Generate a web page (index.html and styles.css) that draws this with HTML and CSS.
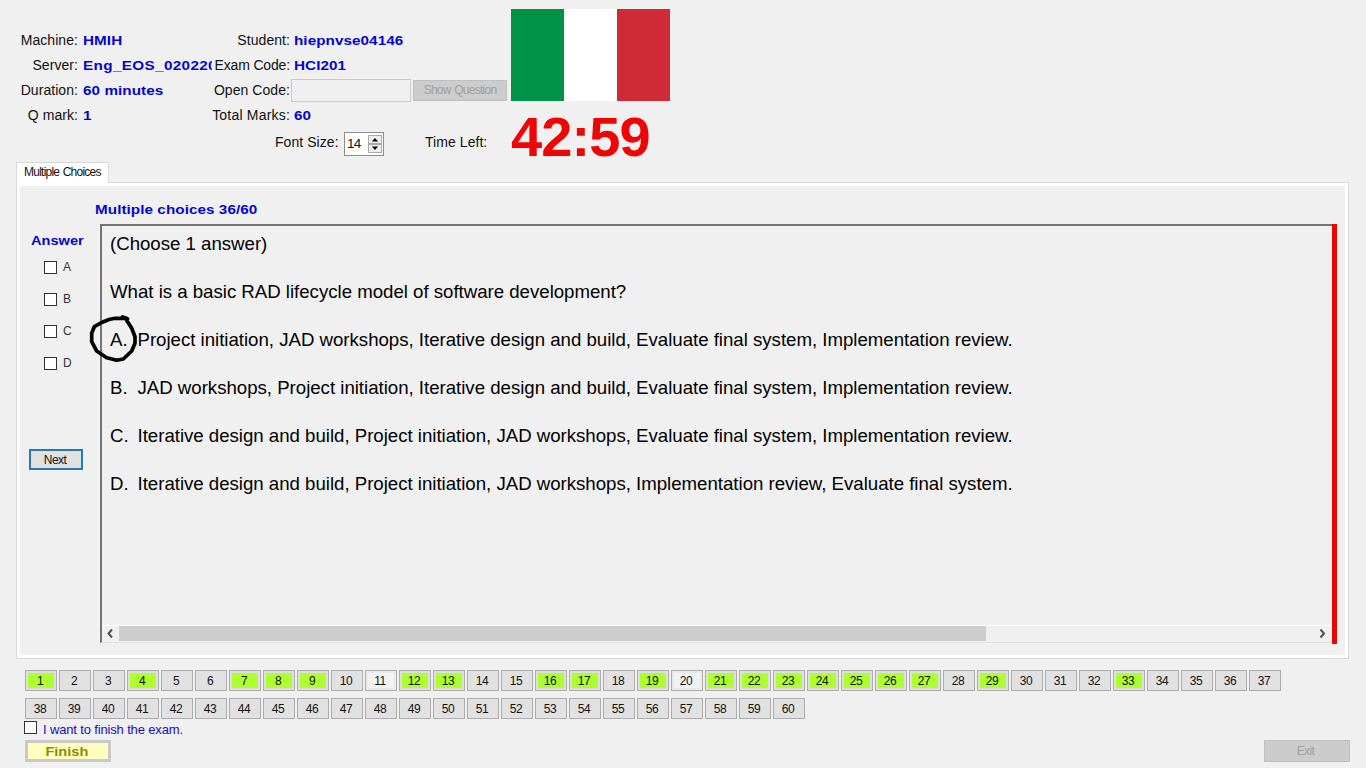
FILE: index.html
```html
<!DOCTYPE html>
<html lang="en">
<head>
<meta charset="utf-8">
<title>Exam</title>
<link rel="stylesheet" href="styles.css">
</head>
<body>
<header class="header">
  <div class="details">
    <div class="info">
      <span class="label">Machine:</span><span class="value">HMIH</span>
      <span class="label">Student:</span><span class="value right">hiepnvse04146</span>
      <span class="label">Server:</span><span class="value server">Eng_EOS_020220</span>
      <span class="label exam">Exam Code:</span><span class="value right">HCI201</span>
      <span class="label">Duration:</span><span class="value">60 minutes</span>
      <span class="label">Open Code:</span><span class="open"><input class="code" disabled><button class="show" disabled>Show Question</button></span>
      <span class="label">Q mark:</span><span class="value">1</span>
      <span class="label total">Total Marks:</span><span class="value right">60</span>
    </div>
    <div class="settings">
      <span class="label size-label">Font Size:</span>
      <div class="spinner"><span class="spin-value">14</span>
        <div class="arrows">
          <svg class="arrow" viewBox="0 0 14 9"><path d="M3 7L7 2.500L11 7Z"/></svg>
          <svg class="arrow" viewBox="0 0 14 9"><path d="M3 2L7 6.500L11 2Z"/></svg>
        </div>
      </div>
      <span class="label">Time Left:</span>
    </div>
  </div>
  <div class="clock">
    <div class="flag"><i class="green"></i><i class="white"></i><i class="red"></i></div>
    <div class="timer">42:59</div>
  </div>
</header>
<div class="tab">Multiple Choices</div>
<main class="panel">
  <h1 class="title">Multiple choices 36/60</h1>
  <div class="work">
    <aside class="side">
      <h2 class="answer">Answer</h2>
      <label class="choice"><i class="box"></i>A</label>
      <label class="choice"><i class="box"></i>B</label>
      <label class="choice"><i class="box"></i>C</label>
      <label class="choice"><i class="box"></i>D</label>
      <button class="next">Next</button>
    </aside>
    <section class="question">
      <div class="text">
        <p class="line">(Choose 1 answer)</p>
        <p class="line">What is a basic RAD lifecycle model of software development?</p>
        <p class="line"><span class="key">A.</span>Project initiation, JAD workshops, Iterative design and build, Evaluate final system, Implementation review.</p>
        <p class="line"><span class="key">B.</span>JAD workshops, Project initiation, Iterative design and build, Evaluate final system, Implementation review.</p>
        <p class="line"><span class="key">C.</span>Iterative design and build, Project initiation, JAD workshops, Evaluate final system, Implementation review.</p>
        <p class="line"><span class="key">D.</span>Iterative design and build, Project initiation, JAD workshops, Implementation review, Evaluate final system.</p>
      </div>
      <div class="scrollbar">
        <svg class="scroll-arrow" viewBox="0 0 17 15"><path d="M10 3.500L6.500 7.500L10 11.500"/></svg>
        <div class="track"><div class="thumb"></div></div>
        <svg class="scroll-arrow" viewBox="0 0 17 15"><path d="M5.500 3.500L9 7.500L5.500 11.500"/></svg>
      </div>
      <svg class="mark" viewBox="0 0 50 50"><path d="M38.500 4L33.500 2L37.500 3.300L26 3.300L20 4.500L12.700 7.500L5.300 11.700L2.700 18.300L2.700 26.700L7.700 36L17.700 42.700L27.700 45.300L34.300 44L42.700 36L46 28.300L46 21.700L42.700 13.300L37.500 5"/></svg>
    </section>
    <div class="redbar"></div>
  </div>
</main>
<nav class="numbers" id="numbers"></nav>
<label class="confirm"><i class="box"></i>I want to finish the exam.</label>
<footer class="footer"><button class="finish"><span class="finish-text">Finish</span></button><button class="exit" disabled>Exit</button></footer>
<script src="app.js"></script>
</body>
</html>
```
FILE: styles.css
```css
* { box-sizing: border-box; }
body { margin: 0; width: 1366px; height: 768px; overflow: hidden; background: #f0f0f0; color: #111; font-family: "Liberation Sans", Arial, sans-serif; font-size: 13.5px; }
button, input { font-family: inherit; margin: 0; padding: 0; border-radius: 0; }
.header { display: flex; height: 162px; }
.details { width: 511px; padding-top: 28px; }
.info { display: grid; grid-template-columns: 78px 134px 78px 221px; grid-auto-rows: 25px; line-height: 25px; }
.label { font-size: 14px; letter-spacing: .06px; white-space: nowrap; justify-self: end; }
.exam { letter-spacing: -.15px; }
.total { letter-spacing: .2px; }
.value { justify-self: start; margin-left: 5px; color: #0505d2; font-weight: bold; letter-spacing: .05px; white-space: nowrap; transform: scaleX(1.13); transform-origin: left; }
.right { margin-left: 4px; }
.server { width: 114px; overflow: hidden; letter-spacing: .32px; }
.open { display: flex; align-items: center; gap: 2px; height: 24px; padding-left: 1px; }
.code { width: 120px; height: 23px; border: 1px solid #c9c9c9; background: #f0f0f0; }
.show { width: 94px; height: 21px; border: 1px solid #bfbfbf; background: #ccc; color: #a0a0a0; font-size: 12px; letter-spacing: -.75px; word-spacing: 1px; }
.settings { display: flex; align-items: center; height: 32px; margin-top: -2px; padding-left: 275px; }
.size-label { width: 63px; }
.spinner { display: flex; justify-content: space-between; width: 40px; height: 24px; margin: 4px 41px 0 6px; padding: 2px 1px 0 2px; border: 1px solid #8c8c8c; background: #fff; }
.spin-value { font-size: 13.5px; line-height: 17px; letter-spacing: -.8px; }
.arrows { display: flex; flex-direction: column; }
.arrow { display: block; width: 14px; height: 9px; border: 1px solid #aaa; background: #eee; }
.clock { width: 159px; padding-top: 9px; }
.flag { display: flex; height: 92px; }
.flag i { flex: 1; }
.green { background: #009246; }
.white { background: #fff; }
.red { background: #ce2b37; }
.timer { color: #f00505; font-size: 56px; line-height: 71px; font-weight: bold; letter-spacing: -.9px; white-space: nowrap; height: 62px; }
.tab { position: relative; z-index: 1; width: 93px; height: 21px; margin: 0 0 -1px 16px; padding-left: 7px; border: 1px solid #d9d9d9; border-bottom: 0; background: #fff; font-size: 12px; line-height: 18px; letter-spacing: -.76px; word-spacing: .8px; white-space: nowrap; }
.panel { width: 1333px; height: 477px; margin-left: 16px; border: 1px solid #dadada; box-shadow: inset 0 0 0 3px #fff; padding-top: 18px; }
.title { width: max-content; height: 23px; margin: 0 0 0 78px; font-size: 13.5px; line-height: 17px; color: #0505d2; letter-spacing: .05px; transform: scaleX(1.13); transform-origin: left; }
.work { display: flex; height: 421px; }
.side { width: 83px; padding-left: 12px; }
.answer { width: max-content; margin: 8px 0 10px 2px; font-size: 13.5px; line-height: 17px; color: #0505d2; transform: scaleX(1.08); transform-origin: left; }
.choice { display: flex; align-items: center; gap: 6px; height: 16px; margin: 0 0 16px 15px; font-size: 12px; line-height: 16px; color: #333; }
.box { width: 13px; height: 13px; border: 1px solid #333; background: #fff; }
.next { display: block; width: 54px; height: 21px; margin-top: 78px; border: 2px solid #2879ad; background: #e1e1e1; box-shadow: inset 0 0 0 1px #cce4f5; font-size: 12px; letter-spacing: -.6px; padding-right: 2px; color: #111; }
.question { position: relative; width: 1232px; height: 419px; border: solid; border-width: 2px 0 1px 2px; border-color: #747474 #fff #e2e2e2 #747474; }
.text { padding: 6px 0 0 8px; height: 399px; }
.line { margin: 0 0 24px; font-size: 18.67px; line-height: 24px; white-space: nowrap; color: #000; letter-spacing: -.02px; }
.key { display: inline-block; width: 27.5px; }
.scrollbar { display: flex; height: 17px; border-top: 1px solid #fff; }
.scroll-arrow { width: 17px; height: 15px; flex: none; fill: none; stroke: #505050; stroke-width: 2; }
.track { flex: 1; }
.thumb { width: 867px; height: 15px; background: #cdcdcd; }
.mark { position: absolute; left: -13px; top: 89px; width: 50px; height: 50px; fill: none; stroke: #000; stroke-width: 3.7; stroke-linejoin: round; stroke-linecap: round; }
.redbar { width: 5px; height: 420px; background: #e60808; }
.numbers { display: grid; grid-template-columns: repeat(37, 32px); grid-auto-rows: 21px; gap: 7px 2px; margin: 11px 0 0 25px; }
.num { display: flex; align-items: center; justify-content: center; padding-right: 2px; border: 1px solid #adadad; background: #e1e1e1; color: #111; font-size: 12px; letter-spacing: -.5px; }
.done { background: #adff2f; box-shadow: inset 0 0 0 2px #dedede; }
.seen { background: #f2f2f2; box-shadow: inset 0 0 0 2px #e9e9e9; }
.confirm { display: flex; gap: 6px; height: 19px; margin: 2px 0 0 24px; line-height: 18px; font-size: 13px; letter-spacing: -.15px; color: #1a0dbb; }
.footer { display: flex; justify-content: space-between; padding: 0 16px 0 25px; }
.finish { width: 86px; height: 22px; border: 3px solid #c9c9c9; background: #ffffc0; color: #8c8c00; font-size: 13.5px; font-weight: bold; line-height: 16px; padding: 1px 3px 0 0; }
.finish-text { display: inline-block; transform: scaleX(1.08); }
.exit { width: 86px; height: 22px; border: 1px solid #bfbfbf; background: #ccc; color: #a0a0a0; font-size: 12px; letter-spacing: -.6px; padding-right: 3px; }
```
FILE: app.js
```js
const answered = [1, 4, 7, 8, 9, 12, 13, 16, 17, 19, 21, 22, 23, 24, 25, 26, 27, 29, 33];
const seen = [11, 20];
const nav = document.getElementById('numbers');
for (let n = 1; n <= 60; n++) {
  const b = document.createElement('button');
  b.className = 'num' + (answered.includes(n) ? ' done' : seen.includes(n) ? ' seen' : '');
  b.textContent = n;
  nav.appendChild(b);
}
```
